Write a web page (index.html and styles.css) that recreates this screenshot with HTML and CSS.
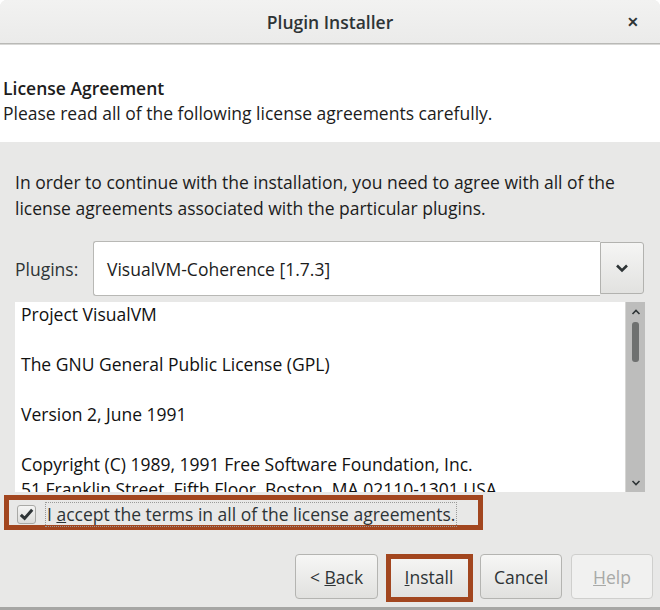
FILE: index.html
```html
<!DOCTYPE html>
<html lang="en">
<head>
<meta charset="utf-8">
<title>Plugin Installer</title>
<link rel="stylesheet" href="styles.css">
</head>
<body>
<div class="window">
  <div class="titlebar">
    <span class="spacer"></span>
    <span class="title">Plugin Installer</span>
    <span class="close-wrap"><span class="close">&#x2715;</span></span>
  </div>
  <div class="header">
    <div class="header-title">License Agreement</div>
    <div class="header-sub">Please read all of the following license agreements carefully.</div>
  </div>
  <div class="content">
    <p class="intro">In order to continue with the installation, you need to agree with all of the license agreements associated with the particular plugins.</p>
    <div class="plugins-row">
      <span class="plugins-label">Plugins:</span>
      <div class="combo">
        <div class="combo-field">VisualVM-Coherence [1.7.3]</div>
        <div class="combo-button">
          <svg width="14" height="10" viewBox="0 0 14 10"><path d="M2 2.5 L7 7.5 L12 2.5" fill="none" stroke="#2e3436" stroke-width="2.6"/></svg>
        </div>
      </div>
    </div>
    <div class="license">
      <div class="license-text">
        <div class="line">Project VisualVM</div>
        <div class="line">&nbsp;</div>
        <div class="line">The GNU General Public License (GPL)</div>
        <div class="line">&nbsp;</div>
        <div class="line">Version 2, June 1991</div>
        <div class="line">&nbsp;</div>
        <div class="line">Copyright (C) 1989, 1991 Free Software Foundation, Inc.</div>
        <div class="line">51 Franklin Street, Fifth Floor, Boston, MA 02110-1301 USA</div>
      </div>
      <div class="scrollbar">
        <svg class="arrow" width="10" height="8" viewBox="0 0 10 8"><path d="M1.5 6 L5 2.5 L8.5 6" fill="none" stroke="#2e3436" stroke-width="1.6"/></svg>
        <div class="track"><div class="thumb"></div></div>
        <svg class="arrow" width="10" height="8" viewBox="0 0 10 8"><path d="M1.5 2 L5 5.5 L8.5 2" fill="none" stroke="#2e3436" stroke-width="1.6"/></svg>
      </div>
    </div>
    <div class="accept-row">
      <span class="checkbox">
        <svg width="15" height="13" viewBox="0 0 15 13"><path d="M1.8 6.8 L5.6 10.4 L13.2 1.8" fill="none" stroke="#2e3436" stroke-width="3"/></svg>
      </span>
      <span class="accept-label">I <u>a</u>ccept the terms in all of the license agreements.</span>
    </div>
    <div class="buttons">
      <button class="btn btn-back">&lt; <u>B</u>ack</button>
      <button class="btn btn-install"><u>I</u>nstall</button>
      <button class="btn btn-cancel">Cancel</button>
      <button class="btn btn-help" disabled><u>H</u>elp</button>
    </div>
  </div>
</div>
</body>
</html>
```

FILE: styles.css
```css
html, body {
  margin: 0;
  padding: 0;
  background: #ffffff;
}
body {
  width: 660px;
  height: 610px;
  overflow: hidden;
  font-family: "Open Sans", Lato, sans-serif;
  font-size: 17.5px;
  color: #2e3436;
}
.window {
  width: 660px;
  height: 610px;
  box-sizing: border-box;
  display: flex;
  flex-direction: column;
  background: #e8e8e7;
  border-radius: 7px 7px 0 0;
  overflow: hidden;
  border-bottom: 3px solid #a6a6a4;
}
.titlebar {
  height: 43px;
  flex: 0 0 43px;
  display: grid;
  grid-template-columns: 1fr auto 1fr;
  align-items: center;
  background: linear-gradient(#f2f2f1, #ebebea);
  border-bottom: 1px solid #b9b9b6;
  box-shadow: 0 1px 0 #d8d8d6;
}
.title {
  font-weight: 600;
  font-size: 17.5px;
  color: #2e3436;
}
.close-wrap {
  display: flex;
  justify-content: flex-end;
  padding-right: 21px;
}
.close {
  font-size: 14px;
  font-weight: bold;
  color: #2e3436;
}
.header {
  flex: 0 0 97px;
  box-sizing: border-box;
  background: #ffffff;
  padding: 31px 3px 0;
  margin-top: 1px;
  line-height: 25px;
  color: #1c1c1c;
}
.header-title {
  font-weight: 600;
}
.content {
  flex: 1;
  display: flex;
  flex-direction: column;
  padding: 27px 0 0 15px;
}
.intro {
  margin: 0;
  line-height: 26px;
  width: 625px;
  color: #1c1c1c;
}
.plugins-row {
  margin-top: 20px;
  display: flex;
  align-items: center;
  height: 55px;
}
.plugins-label {
  width: 78px;
  flex: 0 0 78px;
  color: #2e3436;
}
.combo {
  display: flex;
  height: 55px;
  width: 551px;
}
.combo-field {
  flex: 1;
  box-sizing: border-box;
  background: #ffffff;
  border: 1px solid #b8b8b5;
  border-right: none;
  border-radius: 3px 0 0 3px;
  display: flex;
  align-items: center;
  padding-left: 13px;
  color: #1c1c1c;
}
.combo-button {
  width: 44px;
  box-sizing: border-box;
  border: 1px solid #b2b2af;
  border-radius: 0 3px 3px 0;
  background: linear-gradient(#f5f5f4, #e2e2e0);
  display: flex;
  align-items: center;
  justify-content: center;
  margin-top: 1px;
  height: 52px;
}
.license {
  margin-top: 6px;
  display: flex;
  width: 630px;
  height: 190px;
}
.license-text {
  flex: 1;
  background: #ffffff;
  padding-left: 6px;
  line-height: 25px;
  color: #111111;
  overflow: hidden;
}
.line {
  white-space: nowrap;
}
.scrollbar {
  width: 19px;
  background: #bdbdbc;
  display: flex;
  flex-direction: column;
  align-items: center;
  border-left: 1px solid #d6d6d4;
}
.scrollbar .arrow {
  flex: 0 0 auto;
  margin: 6px 0 4px;
}
.scrollbar .arrow:last-child {
  margin: 4px 0 5px;
}
.track {
  flex: 1;
  width: 100%;
  display: flex;
  justify-content: center;
}
.thumb {
  margin-top: 2px;
  width: 7px;
  height: 40px;
  border-radius: 3px;
  background: #6f7170;
}
.accept-row {
  margin-top: 3px;
  margin-left: -11px;
  width: 479px;
  height: 35px;
  box-sizing: border-box;
  border: 5px solid #a2461f;
  display: flex;
  align-items: center;
  padding-left: 8px;
}
.checkbox {
  width: 19px;
  height: 19px;
  margin-top: 3px;
  box-sizing: border-box;
  border: 1px solid #a9a9a6;
  border-radius: 3px;
  background: linear-gradient(#f4f4f3, #dcdcda);
  display: flex;
  align-items: center;
  justify-content: center;
}
.accept-label {
  margin-left: 9px;
  margin-top: 4px;
  padding: 0 1px;
  border: 1px dotted #9a9a98;
  line-height: 23px;
  color: #2e3436;
}
.buttons {
  margin-top: 24px;
  display: flex;
  justify-content: flex-end;
  gap: 9px;
  padding-right: 7px;
}
.btn {
  position: relative;
  height: 45px;
  box-sizing: border-box;
  border: 1px solid #b4b4b1;
  border-radius: 4px;
  background: linear-gradient(#f6f6f5, #e1e1df);
  font-family: "Open Sans", Lato, sans-serif;
  font-size: 17.5px;
  color: #2e3436;
  padding: 0;
}
.btn-back { width: 83px; }
.btn-install { width: 84px; }
.btn-cancel { width: 82px; }
.btn-help {
  width: 82px;
  background: #f1f1f0;
  border-color: #cfcfcd;
  color: #a8a9a7;
}
.btn-install::after {
  content: "";
  position: absolute;
  left: -2px;
  right: -3px;
  top: -1px;
  bottom: -4px;
  border: 5px solid #a2461f;
}
```
